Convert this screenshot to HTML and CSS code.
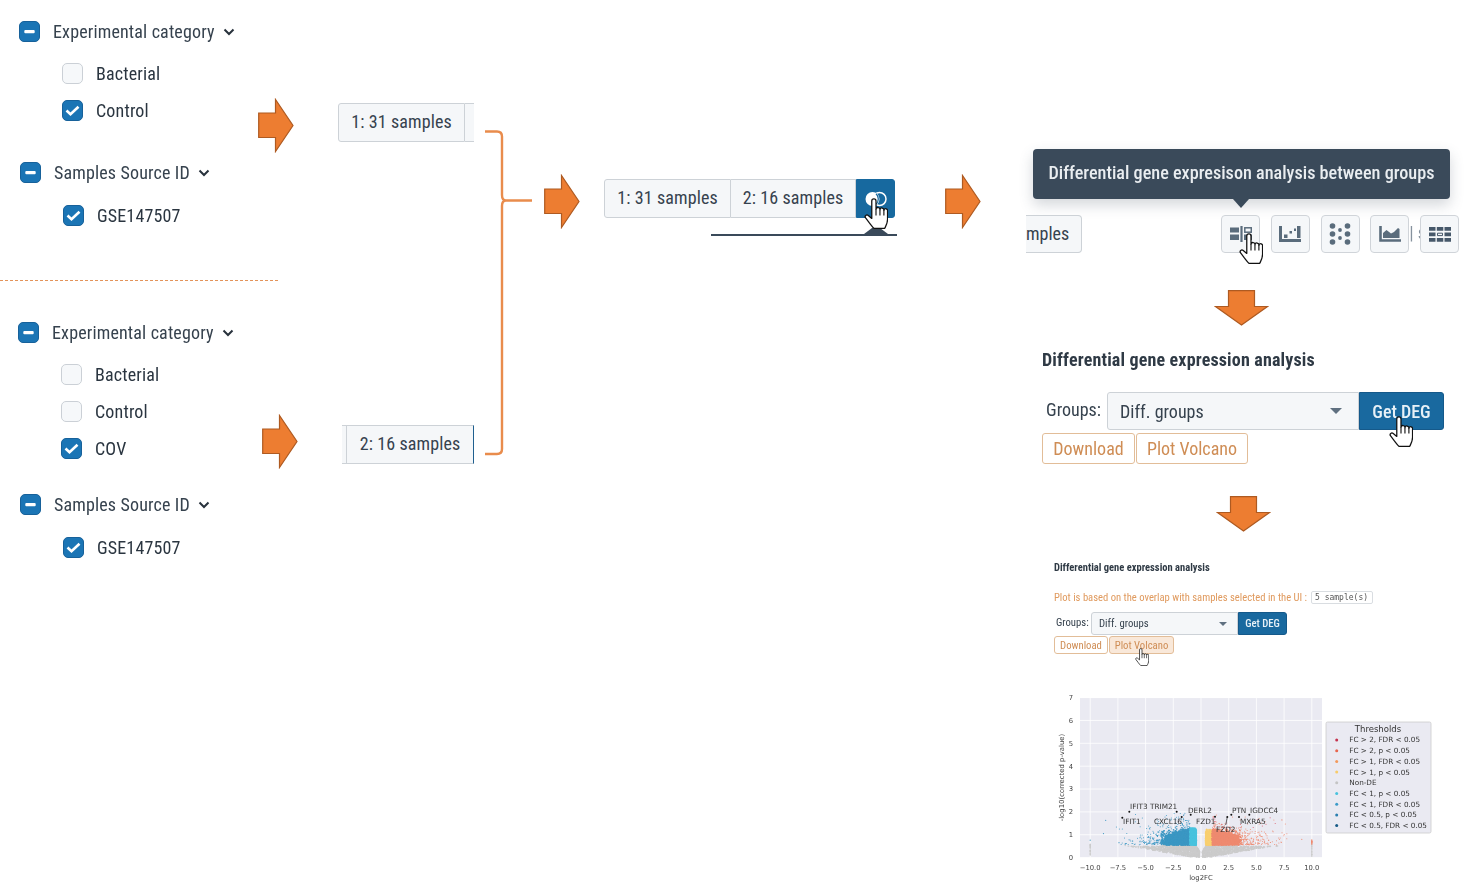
FILE: index.html
```html
<!DOCTYPE html>
<html lang="en">
<head>
<meta charset="utf-8">
<title>Differential gene expression workflow</title>
<link rel="stylesheet" href="styles.css">
</head>
<body>
<svg class="defs" width="0" height="0" aria-hidden="true">
  <defs>
    <symbol id="hand" viewBox="0 0 17 22">
      <path d="M5.500 14.500V2.200a1.500 1.500 0 0 1 3 0V8a1.400 1.400 0 0 1 2.800.3 1.400 1.400 0 0 1 2.800.4 1.300 1.300 0 0 1 2.600.5V15c0 3-1.200 4.800-2 6.500H7c-1-.8-2-2.300-3.200-3.800L1 14c-.8-1.300.8-2.600 2-1.600z" fill="#fff" stroke="#111" stroke-width=".9" stroke-linejoin="round"/>
      <path d="M8.500 8v4.500M11.300 8.300v4.200M14.100 8.700v3.800" fill="none" stroke="#111" stroke-width=".8"/>
    </symbol>
    <symbol id="arrow-right" viewBox="0 0 36 55">
      <path d="M.7 15H17.500V1.500L35 27.500 17.500 53.500V39.500H.7z" fill="#ed7d31" stroke="#ae5a21" stroke-width="1.200"/>
    </symbol>
    <symbol id="arrow-down" viewBox="0 0 55 36">
      <path d="M14.500.7H40.500V16.500H53.500L27.500 35 1.500 16.500H14.500z" fill="#ed7d31" stroke="#ae5a21" stroke-width="1.200"/>
    </symbol>
    <symbol id="chev" viewBox="0 0 12 8">
      <path d="M1.500 1.500 6 6l4.500-4.500" fill="none" stroke="#28323c" stroke-width="2"/>
    </symbol>
    <symbol id="tick" viewBox="0 0 19 19">
      <path d="M3.500 9.500l4 3.800 8-7.600" fill="none" stroke="#fff" stroke-width="2.600"/>
    </symbol>
    <symbol id="dash" viewBox="0 0 19 19">
      <rect x="4.300" y="8" width="10.400" height="3.200" rx="1" fill="#fff"/>
    </symbol>
  </defs>
</svg>

<main class="canvas">

  <section class="filter g1">
    <div class="row head"><span class="cb on"><svg class="glyph"><use href="#dash"/></svg></span><span class="lbl">Experimental category</span><svg class="chev"><use href="#chev"/></svg></div>
    <div class="row item"><span class="cb"></span><span class="lbl">Bacterial</span></div>
    <div class="row item"><span class="cb on"><svg class="glyph"><use href="#tick"/></svg></span><span class="lbl">Control</span></div>
  </section>
  <section class="filter g2">
    <div class="row head"><span class="cb on"><svg class="glyph"><use href="#dash"/></svg></span><span class="lbl">Samples Source ID</span><svg class="chev"><use href="#chev"/></svg></div>
    <div class="row item"><span class="cb on"><svg class="glyph"><use href="#tick"/></svg></span><span class="lbl">GSE147507</span></div>
  </section>
  <section class="filter g3">
    <div class="row head"><span class="cb on"><svg class="glyph"><use href="#dash"/></svg></span><span class="lbl">Experimental category</span><svg class="chev"><use href="#chev"/></svg></div>
    <div class="row item"><span class="cb"></span><span class="lbl">Bacterial</span></div>
    <div class="row item"><span class="cb"></span><span class="lbl">Control</span></div>
    <div class="row item"><span class="cb on"><svg class="glyph"><use href="#tick"/></svg></span><span class="lbl">COV</span></div>
  </section>
  <section class="filter g4">
    <div class="row head"><span class="cb on"><svg class="glyph"><use href="#dash"/></svg></span><span class="lbl">Samples Source ID</span><svg class="chev"><use href="#chev"/></svg></div>
    <div class="row item"><span class="cb on"><svg class="glyph"><use href="#tick"/></svg></span><span class="lbl">GSE147507</span></div>
  </section>

  <div class="divider"></div>

  <svg class="arrow ar1"><use href="#arrow-right"/></svg>
  <svg class="arrow ar2"><use href="#arrow-right"/></svg>
  <svg class="arrow ar3"><use href="#arrow-right"/></svg>
  <svg class="arrow ar4"><use href="#arrow-right"/></svg>
  <svg class="arrow-d ad1"><use href="#arrow-down"/></svg>
  <svg class="arrow-d ad2"><use href="#arrow-down"/></svg>

  <svg class="bracket" viewBox="0 0 52 328"><path d="M1 2.500H13Q18 2.500 18 7.500V66Q18 71.500 22 71.500H48M22 71.500Q18 71.500 18 77V320Q18 325 13 325H1" fill="none" stroke="#e98c4c" stroke-width="2.400"/></svg>

  <div class="seg s1"><span class="seg-b first">1: 31 samples</span><span class="seg-b stub"></span></div>
  <div class="seg s2"><span class="seg-b stub-l"></span><span class="seg-b last-dark">2: 16 samples</span></div>

  <div class="seg s3">
    <span class="seg-b first w126">1: 31 samples</span>
    <span class="seg-b w125">2: 16 samples</span>
    <span class="seg-b venn"><svg viewBox="0 0 24 18" width="24" height="18"><circle cx="8.500" cy="9" r="7" fill="#fff"/><circle cx="15.500" cy="9" r="6.500" fill="none" stroke="#fff" stroke-width="1.500"/><path d="M12 3.800a7 7 0 0 1 0 10.400" fill="none" stroke="#17699f" stroke-width="1.200"/></svg></span>
  </div>
  <div class="tip-stub"></div>
  <svg class="hand h1"><use href="#hand"/></svg>

  <div class="tooltip">Differential gene expresison analysis between groups</div>
  <div class="toolbar">
    <span class="seg-b clip">mples</span>
    <span class="tools">
      <span class="tool"><svg viewBox="0 0 22 16" width="22" height="16"><path d="M0 1.500h9v5H0zM0 8.500h9v5.500H0z" fill="#5a6c7c"/><path d="M11.500 0v16" stroke="#5a6c7c" stroke-width="2.200"/><rect x="14.800" y="1.800" width="6.500" height="4.400" fill="none" stroke="#5a6c7c" stroke-width="1.500"/><path d="M14 8.500h8v5.500h-8z" fill="#5a6c7c"/></svg></span>
      <span class="tool"><svg viewBox="0 0 22 16" width="22" height="16"><path d="M1.500 0v14.500H22" fill="none" stroke="#5a6c7c" stroke-width="3"/><path d="M5 8.500h3.500V12H5zM10.500 5h2.500v2.500h-2.500zM15 2.500h2V5h-2zM18 0h3.500v12H18z" fill="#5a6c7c"/></svg></span>
      <span class="tool"><svg viewBox="0 0 22 22" width="22" height="22"><g fill="#5a6c7c"><circle cx="3.500" cy="3" r="2.800"/><circle cx="18.500" cy="3" r="2.800"/><circle cx="3.500" cy="11" r="2.800"/><circle cx="18.500" cy="11" r="2.800"/><circle cx="3.500" cy="19" r="2.800"/><circle cx="18.500" cy="19" r="2.800"/><circle cx="11" cy="7" r="1.900"/><circle cx="11" cy="15" r="1.900"/></g></svg></span>
      <span class="tool"><svg viewBox="0 0 22 16" width="22" height="16"><path d="M1.500 0v14.500H22" fill="none" stroke="#5a6c7c" stroke-width="2.600"/><path d="M4 12V7l3.500-3 4.500 3.500 3-1.500 4-4 1.500 1v9z" fill="#5a6c7c"/></svg></span>
      <span class="ghost">| s</span>
      <span class="tool last"><svg viewBox="0 0 22 15" width="22" height="15"><path d="M0 0h6.500v3.800H0zM7.800 0h6.500v3.800H7.800zM15.500 0H22v3.800h-6.500zM0 5.500h6.500v3.800H0zM15.500 5.500H22v3.800h-6.500zM0 11h6.500v3.800H0zM7.800 11h6.500v3.800H7.800zM15.500 11H22v3.800h-6.500z" fill="#46586a"/><path d="M8.500 6.200h5v2.400h-5z" fill="none" stroke="#46586a"/></svg></span>
    </span>
  </div>
  <svg class="hand h2"><use href="#hand"/></svg>

  <section class="deg large">
    <h2 class="deg-title">Differential gene expression analysis</h2>
    <div class="deg-form">
      <span class="deg-lbl">Groups:</span>
      <span class="deg-sel"><span>Diff. groups</span><i class="caret"></i></span>
      <span class="deg-go">Get DEG</span>
    </div>
    <div class="deg-acts"><span class="out">Download</span><span class="out">Plot Volcano</span></div>
  </section>
  <svg class="hand h3"><use href="#hand"/></svg>

  <section class="deg small">
    <h2 class="deg-title">Differential gene expression analysis</h2>
    <p class="note">Plot is based on the overlap with samples selected in the UI :<code class="chip">5 sample(s)</code></p>
    <div class="deg-form">
      <span class="deg-lbl">Groups:</span>
      <span class="deg-sel"><span>Diff. groups</span><i class="caret"></i></span>
      <span class="deg-go">Get DEG</span>
    </div>
    <div class="deg-acts"><span class="out">Download</span><span class="out hover">Plot Volcano</span></div>
  </section>
  <svg class="hand h4"><use href="#hand"/></svg>

  <svg class="volcano" id="volcano" viewBox="1050 685 400 197" width="400" height="197">
    <rect x="1080" y="698" width="242" height="159.500" fill="#eaeaf2"/>
    <g id="grid" stroke="#fff" stroke-width=".8"></g>
    <g id="dots"></g>
    <g id="marks"></g>
    <g class="ticks" id="ticks"></g>
    <text class="ax" x="1201" y="880" text-anchor="middle">log2FC</text>
    <text class="ax" transform="translate(1064 777.500) rotate(-90)" text-anchor="middle">-log10(corrected p-value)</text>
    <g class="genes">
      <text x="1130" y="809">IFIT3</text><text x="1150" y="809">TRIM21</text><text x="1188" y="812.500">DERL2</text>
      <text x="1232" y="812.500">PTN</text><text x="1250" y="812.500">IGDCC4</text>
      <text x="1123" y="823.500">IFIT1</text><text x="1154" y="823.500">CXCL16</text><text x="1196" y="823.500">FZD1</text>
      <text x="1240" y="823.500">MXRA5</text><text x="1216" y="831.500">FZD2</text>
    </g>
    <rect x="1326" y="722" width="105" height="111" rx="1.500" fill="#eaeaf2" stroke="#ccc" stroke-width=".8"/>
    <text class="leg-t" x="1378" y="732" text-anchor="middle">Thresholds</text>
    <g class="leg" id="legend"></g>
  </svg>
</main>
<script src="volcano.js"></script>
</body>
</html>
```

FILE: styles.css
```css
html, body { margin: 0; padding: 0; background: #fff; }
.defs { position: absolute; }
.canvas {
  position: relative;
  width: 1464px;
  height: 882px;
  overflow: hidden;
  font-family: Roboto, "Liberation Sans", sans-serif;
  font-stretch: 80%;
  color: #36424e;
  filter: blur(.3px);
}

/* filter trees */
.filter { position: absolute; display: flex; flex-direction: column; gap: 16px; font-size: 18px; letter-spacing: .15px; }
.g1 { left: 19px; top: 21px; }
.g2 { left: 20px; top: 162px; }
.g3 { left: 18px; top: 322px; }
.g4 { left: 20px; top: 494px; }
.row { display: flex; align-items: center; height: 21px; gap: 13px; }
.head { margin-bottom: 5px; }
.item { margin-left: 43px; }
.g4 .head, .g2 .head { margin-bottom: 6px; }
.cb {
  flex: none; box-sizing: border-box; width: 21px; height: 21px;
  border: 1.500px solid #cbd0d6; border-radius: 5px; background: #f6f8fa;
}
.cb.on { background: #1b75b5; border: 1px solid #17619a; border-bottom-width: 1.500px; }
.glyph { display: block; width: 19px; height: 19px; }
.lbl { display: inline-block; white-space: nowrap; }
.item .lbl { color: #2a3540; }
.chev { width: 12px; height: 8px; margin-left: -5px; }

.divider { position: absolute; left: 0; top: 280px; width: 278px; border-top: 1px dashed #e3935a; }

.arrow { position: absolute; width: 36px; height: 55px; }
.ar1 { left: 258px; top: 98px; }
.ar2 { left: 262px; top: 414px; }
.ar3 { left: 544px; top: 174px; }
.ar4 { left: 945px; top: 174px; }
.arrow-d { position: absolute; width: 55px; height: 36px; }
.ad1 { left: 1214px; top: 290px; }
.ad2 { left: 1216px; top: 496px; }
.bracket { position: absolute; left: 484px; top: 129px; width: 52px; height: 328px; }

/* sample segments */
.seg { position: absolute; display: flex; height: 39px; font-size: 18px; letter-spacing: .1px; }
.seg-b {
  box-sizing: border-box; display: flex; align-items: center; justify-content: center;
  height: 100%; padding-bottom: 2px; background: #f5f7f9; border: 1px solid #cdd2d7; border-left-width: 0; white-space: nowrap;
}
.seg-b.first { border-left-width: 1px; border-radius: 3px 0 0 3px; }
.s1 { left: 338px; top: 103px; }
.s1 .first { width: 127px; }
.stub { width: 9px; border-right: 0; }
.s2 { left: 342px; top: 425px; }
.stub-l { width: 5px; border-left: 0; }
.last-dark { width: 127px; border-right: 1.500px solid #1f5f8f; }
.s3 { left: 604px; top: 179px; }
.w126 { width: 127px; }
.w125 { width: 125px; }
.venn { width: 39px; padding-bottom: 0; background: #17699f; border: 1px solid #17699f; border-radius: 0 3px 3px 0; }
.tip-stub {
  position: absolute; left: 711px; top: 234px; width: 186px; height: 2px; background: #3a4a5a;
}
.tip-stub::after {
  content: ""; position: absolute; left: 153px; top: -9px;
  border: 12px solid transparent; border-top: 0; border-bottom: 9px solid #3a4a5a;
}
.hand { position: absolute; }
.h1 { left: 864px; top: 198px; width: 24px; height: 31px; }
.h2 { left: 1239px; top: 233px; width: 24px; height: 31px; }
.h3 { left: 1389px; top: 416px; width: 24px; height: 31px; }
.h4 { left: 1135px; top: 648px; width: 14px; height: 18px; }

/* tooltip */
.tooltip {
  position: absolute; left: 1033px; top: 149px; width: 417px; height: 50px; box-sizing: border-box;
  display: flex; align-items: center; justify-content: center; padding-bottom: 3px;
  background: #3a4a5a; color: #e9edf0; border-radius: 4px; font-size: 18.200px; font-weight: 500;
  box-shadow: 0 6px 14px rgba(58, 74, 90, .22);
}
.tooltip::after {
  content: ""; position: absolute; left: 200px; top: 100%;
  border: 8px solid transparent; border-bottom: 0; border-top: 9px solid #3a4a5a;
}
.toolbar {
  position: absolute; left: 1026px; top: 215px; width: 433px; height: 38px; display: flex;
  font-size: 18px; overflow: hidden;
}
.clip { width: 56px; justify-content: flex-start; border-left: 0; border-radius: 0 4px 4px 0; }
.tools { position: relative; display: flex; gap: 10.700px; margin-left: 139.500px; }
.tool {
  box-sizing: border-box; width: 39px; height: 38px; display: flex; align-items: center; justify-content: center;
  background: #f5f7f9; border: 1.500px solid #d0d4d9; border-radius: 4px;
}
.tool.last { position: relative; }
.ghost { position: absolute; left: 188px; top: 7px; color: #86929e; white-space: nowrap; }

/* differential panels */
.deg { position: absolute; }
.deg-title { margin: 0; font-weight: 700; color: #2f3a45; white-space: nowrap; }
.deg-form { display: flex; align-items: stretch; }
.deg-lbl { display: flex; align-items: center; }
.deg-sel {
  box-sizing: border-box; flex: none; display: flex; align-items: center; justify-content: space-between;
  background: #f5f7f9; border: 1px solid #cdd2d7; border-radius: 3px 0 0 3px;
}
.caret { display: block; border: 6px solid transparent; border-bottom: 0; border-top: 6px solid #5f7080; }
.deg-go {
  box-sizing: border-box; flex: none; display: flex; align-items: center; justify-content: center;
  background: #19699f; border: 1px solid #15598a; border-radius: 0 3px 3px 0; color: #e8f1f7; font-weight: 500;
}
.deg-acts { display: flex; }
.out {
  box-sizing: border-box; display: flex; align-items: center; justify-content: center;
  color: #cf8d55; background: #fff; border: 1px solid #e2bd98; border-radius: 3px;
}

.large { left: 1042px; top: 349px; font-size: 18px; }
.large .deg-title { font-size: 18px; line-height: 22px; letter-spacing: .16px; }
.large .deg-form { height: 38px; margin-top: 21px; margin-left: 4px; }
.large .deg-lbl { width: 61px; padding-bottom: 4px; box-sizing: border-box; }
.large .deg-sel { width: 252px; padding: 0 16px 0 12px; }
.large .deg-go { width: 85px; }
.large .deg-acts { margin-top: 3px; gap: 1px; }
.large .out { height: 31px; }
.large .out:first-child { width: 93px; }
.large .out:last-child { width: 112px; }

.small { left: 1054px; top: 561px; font-size: 10.700px; }
.small .deg-title { font-size: 10.500px; line-height: 13px; }
.note { display: flex; align-items: center; margin: 17px 0 0; color: #e09a5e; line-height: 13px; white-space: nowrap; font-size: 10.600px; }
.chip {
  box-sizing: border-box; display: inline-block; height: 13px; width: 62px; margin-left: 4px; padding: 0 3px;
  border: 1px solid #d9dde1; border-radius: 2px; font-family: "DejaVu Sans Mono", monospace; font-size: 8px; line-height: 12px; color: #555;
  font-stretch: normal; white-space: nowrap;
}
.small .deg-form { height: 23px; margin-top: 8px; margin-left: 2px; }
.small .deg-lbl { width: 35px; padding-bottom: 3px; box-sizing: border-box; }
.small .deg-sel { width: 147px; padding: 0 10px 0 7px; }
.small .caret { border-width: 4px; border-top-width: 4px; border-bottom-width: 0; }
.small .deg-go { width: 49px; }
.small .deg-acts { margin-top: 1px; gap: 1px; }
.small .out { height: 18px; }
.small .out:first-child { width: 54px; }
.small .out:last-child { width: 65px; }
.out.hover { background: #f9e8d9; }

/* volcano */
.volcano { position: absolute; left: 1050px; top: 685px; font-family: "DejaVu Sans", sans-serif; font-stretch: normal; filter: blur(.25px); }
.ticks text { font-size: 6.800px; fill: #444; }
.ax { font-size: 6.900px; fill: #444; }
.genes text { font-size: 7.300px; fill: #333; }
.leg text { font-size: 7.250px; fill: #333; }
.leg-t { font-size: 8.500px; fill: #333; }
```

FILE: volcano.js
```js
(function () {
  var NS = 'http://www.w3.org/2000/svg';
  var seed = 41;
  function rnd() { seed = (seed * 16807) % 2147483647; return seed / 2147483647; }
  function exp(s) { return -Math.log(1 - rnd() * 0.999) * s; }
  function gauss() { return Math.sqrt(-2 * Math.log(rnd() + 1e-6)) * Math.cos(6.2832 * rnd()); }
  function X(v) { return 1201 + v * 11.08; }
  function Y(v) { return 857.6 - v * 22.86; }
  function el(name, attrs, parent, text) {
    var n = document.createElementNS(NS, name);
    for (var k in attrs) n.setAttribute(k, attrs[k]);
    if (text) n.textContent = text;
    parent.appendChild(n);
    return n;
  }
  var grid = document.getElementById('grid');
  var ticks = document.getElementById('ticks');
  var dots = document.getElementById('dots');
  var marks = document.getElementById('marks');
  var legend = document.getElementById('legend');

  [-10, -7.5, -5, -2.5, 0, 2.5, 5, 7.5, 10].forEach(function (v) {
    el('line', { x1: X(v), x2: X(v), y1: 698, y2: 857.5 }, grid);
    var label = (v < 0 ? '\u2212' : '') + Math.abs(v).toFixed(1);
    el('text', { x: X(v), y: 870, 'text-anchor': 'middle' }, ticks, label);
  });
  for (var t = 0; t <= 7; t++) {
    el('line', { x1: 1080, x2: 1322, y1: Y(t), y2: Y(t) }, grid);
    el('text', { x: 1073, y: Y(t) + 2.4, 'text-anchor': 'end' }, ticks, String(t));
  }

  var C = { grey: '#cbcbcb', cyan: '#49c2de', blue: '#3b97c3', deep: '#2a7fb0', yellow: '#f8cf70', salmon: '#ee8a70', red: '#d9566a' };
  function dot(x, y, c, r) { el('circle', { cx: X(x).toFixed(1), cy: Y(y).toFixed(1), r: r || 0.55, fill: c }, dots); }

  var i, x, y, a;
  // non-significant cloud
  for (i = 0; i < 2600; i++) {
    x = gauss() * 2.3;
    a = Math.abs(x);
    if (a > 7 || a < 0.12) continue;
    var lo = Math.max(0.02, a * 0.085 - 0.05);
    var hi = a < 0.5 ? 0.15 + a * 0.9 : 0.58;
    if (a > 3.5) { hi = 0.5; lo = Math.max(lo, 0.25); }
    y = lo + rnd() * (hi - lo);
    dot(x, y, C.grey, 0.7);
  }
  // significant clouds
  function side(sign, n, scale, top) {
    for (i = 0; i < n; i++) {
      a = 0.42 + exp(scale);
      y = 0.56 + exp(top);
      if (a > 7.8 || y > 1.95) continue;
      if (a < 1 && y > 1.25) continue;
      var c;
      if (sign < 0) c = a < 1 ? C.cyan : (a < 2 && rnd() < 0.15 ? C.deep : C.blue);
      else c = a < 1 ? C.yellow : (y > 1.3 && rnd() < 0.4 ? C.red : C.salmon);
      dot(sign * a, y, c, a > 3.6 || y > 1.25 ? 0.5 : 0.8);
    }
  }
  side(-1, 1700, 1.4, 0.3);
  side(1, 1600, 1.5, 0.27);
  // dense core blocks
  for (i = 0; i < 1000; i++) { a = 1 + rnd() * 2.2; y = 0.56 + rnd() * (0.72 - (a - 1) * 0.15); dot(-a, y, C.blue, 0.9); }
  for (i = 0; i < 300; i++) { a = 0.42 + rnd() * 0.58; y = 0.56 + rnd() * 0.72; dot(-a, y, C.cyan, 0.9); }
  for (i = 0; i < 260; i++) { a = 0.42 + rnd() * 0.58; y = 0.56 + rnd() * 0.58; dot(a, y, C.yellow, 0.9); }
  for (i = 0; i < 1000; i++) { a = 1 + rnd() * 2.4; y = 0.56 + rnd() * (0.68 - (a - 1) * 0.12); dot(a, y, C.salmon, 0.9); }
  // clipped columns and outliers
  for (i = 0; i < 30; i++) { dot(-10, 0.1 + rnd() * 0.5, C.grey, 0.6); dot(10, 0.05 + rnd() * 0.55, C.grey, 0.6); }
  for (i = 0; i < 14; i++) dot(10, 0.58 + rnd() * 0.2, C.salmon, 0.6);
  [[-10, 0.76], [-8.6, 1.63], [-8.8, 1.05], [-7.4, 0.65], [7.3, 1.65], [9.1, 0.8]].forEach(function (p) {
    dot(p[0], p[1], p[0] < 0 ? C.blue : C.salmon, 0.6);
  });

  // annotated genes
  [[1129.3, 811.7], [1176.7, 811.7], [1122.3, 817.7], [1181.7, 817], [1190.7, 814.7], [1215, 816.7], [1231.3, 814.7], [1249.3, 814.7], [1239, 817], [1227.3, 817]].forEach(function (p) {
    el('circle', { cx: p[0], cy: p[1], r: 1, fill: '#111' }, marks);
  });
  el('line', { x1: 1225.7, y1: 825, x2: 1227.3, y2: 817, stroke: '#222', 'stroke-width': 0.7 }, marks);

  [['#c5344f', 'FC > 2, FDR < 0.05'], ['#e8664e', 'FC > 2, p < 0.05'], ['#f39a5c', 'FC > 1, FDR < 0.05'], ['#f8cb6a', 'FC > 1, p < 0.05'], ['#c4c4c4', 'Non-DE'], ['#49c2de', 'FC < 1, p < 0.05'], ['#3b9bc9', 'FC < 1, FDR < 0.05'], ['#2a7fb0', 'FC < 0.5, p < 0.05'], ['#155a86', 'FC < 0.5, FDR < 0.05']].forEach(function (row, n) {
    var ly = 740 + n * 10.7;
    el('circle', { cx: 1336.7, cy: ly, r: 1.5, fill: row[0] }, legend);
    el('text', { x: 1349.3, y: ly + 2.4 }, legend, row[1]);
  });
})();
```
